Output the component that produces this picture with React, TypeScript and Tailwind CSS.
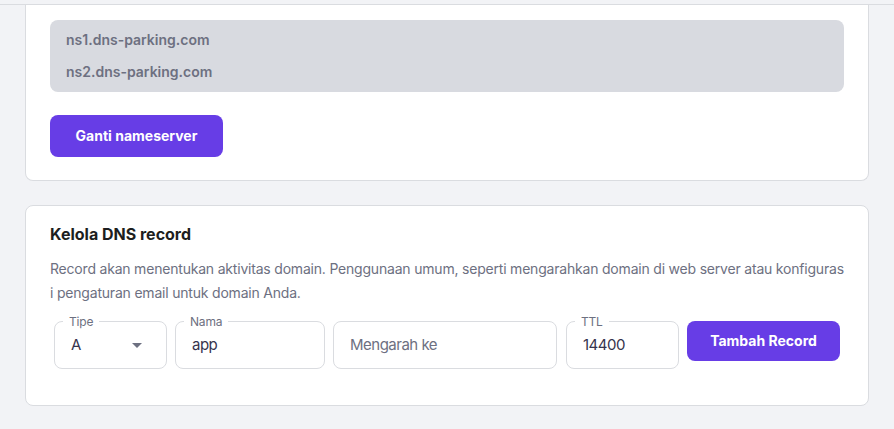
import React from "react";

function Field({
  label,
  value,
  placeholder,
  className,
  select,
}: {
  label?: string;
  value?: string;
  placeholder?: string;
  className: string;
  select?: boolean;
}) {
  return (
    <div
      className={`relative flex h-12 items-center rounded-lg border border-[#dadce0] bg-white px-4 ${className}`}
    >
      {label && (
        <span className="absolute -top-2 left-2 bg-white px-1.5 text-xs leading-4 tracking-[-0.2px] text-[#6d7081]">
          {label}
        </span>
      )}
      {value ? (
        <span className="text-[15px] tracking-[-0.5px] text-[#36344d]">{value}</span>
      ) : (
        <span className="text-[15px] tracking-[-0.5px] text-[#6d7081]">{placeholder}</span>
      )}
      {select && (
        <svg
          className="ml-auto mr-2"
          width="10"
          height="5"
          viewBox="0 0 10 5"
        >
          <path d="M0 0h10L5 5z" fill="#6d7081" />
        </svg>
      )}
    </div>
  );
}

export default function App() {
  return (
    <div
      className="min-h-[429px] bg-[#f2f3f6] pt-1 text-[#1d1e20]"
      style={{ fontFamily: "Inter, 'Noto Sans', sans-serif" }}
    >
      <div className="border-t border-[#dadce0]">
        <div className="mx-[25px] rounded-b-lg border-x border-b border-[#dadce0] bg-white px-6 pt-[15px] pb-[23px]">
          <div className="rounded-lg bg-[#d8dae0] px-4 py-1 text-sm font-semibold leading-8 text-[#6d7081]">
            <p>ns1.dns-parking.com</p>
            <p>ns2.dns-parking.com</p>
          </div>
          <button className="mt-[23px] h-[42px] w-[173px] rounded-lg bg-[#673de6] text-sm font-bold text-white">
            Ganti nameserver
          </button>
        </div>
      </div>

      <div className="mx-[25px] mt-6 h-[201px] rounded-lg border border-[#dadce0] bg-white px-6 pt-4">
        <h2 className="text-base font-bold leading-6">Kelola DNS record</h2>
        <p className="mt-[11px] whitespace-nowrap text-sm leading-6 tracking-[-0.2px] text-[#6d7081]">
          Record akan menentukan aktivitas domain. Penggunaan umum, seperti
          mengarahkan domain di web server atau konfiguras
          <br />i pengaturan email untuk domain Anda.
        </p>
        <div className="mt-4 ml-1 flex items-start gap-2">
          <Field label="Tipe" value="A" className="w-[113px]" select />
          <Field label="Nama" value="app" className="w-[150px]" />
          <Field placeholder="Mengarah ke" className="w-[224px]" />
          <Field label="TTL" value="14400" className="ml-px w-[113px]" />
          <button className="h-10 w-[153px] rounded-lg bg-[#673de6] text-sm font-bold text-white">
            Tambah Record
          </button>
        </div>
      </div>
    </div>
  );
}
